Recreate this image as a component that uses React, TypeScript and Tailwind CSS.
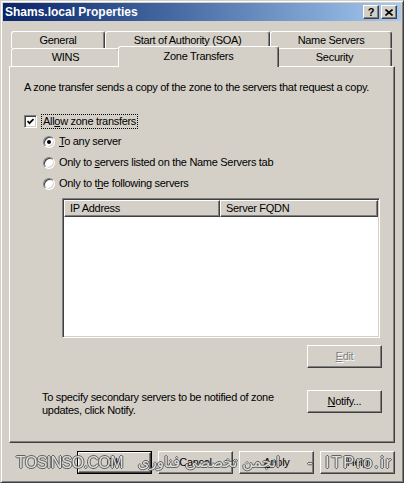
import type { ReactNode } from 'react';

const raised =
  'border border-t-white border-l-white border-r-[#404040] border-b-[#404040] shadow-[inset_-1px_-1px_#808080]';
const sunken =
  'border border-t-[#808080] border-l-[#808080] border-r-white border-b-white shadow-[inset_1px_1px_#404040,inset_-1px_-1px_#d4d0c8]';

function Tab({ label, width, selected }: { label: string; width: string; selected?: boolean }) {
  return (
    <div
      className={`${width} ${
        selected ? 'relative z-10 h-[21px] -mx-[2px] mb-[-1px] bg-[#d4d0c8] items-start pt-[3px]' : 'h-full items-center'
      } flex justify-center rounded-t-[3px] border-t border-l border-r border-t-white border-l-white border-r-[#404040] shadow-[inset_-1px_0_#808080]`}
    >
      {label}
    </div>
  );
}

function Button({ children, disabled, isDefault }: { children: ReactNode; disabled?: boolean; isDefault?: boolean }) {
  const inner = (
    <div
      className={`${raised} w-full h-full flex items-center justify-center ${
        disabled ? 'text-[#808080] [text-shadow:1px_1px_0_white]' : ''
      }`}
    >
      {children}
    </div>
  );
  if (isDefault) return <div className="w-[75px] h-[23px] border border-black">{inner}</div>;
  return <div className="w-[75px] h-[23px]">{inner}</div>;
}

function Radio({ checked, children }: { checked?: boolean; children: ReactNode }) {
  return (
    <div className="flex items-center h-[13px] pl-[33px]">
      <div className={`w-[12px] h-[12px] rounded-full bg-white flex items-center justify-center ${sunken}`}>
        {checked && <div className="w-[4px] h-[4px] rounded-full bg-black" />}
      </div>
      <span className="ml-[4px]">{children}</span>
    </div>
  );
}

export default function App() {
  return (
    <div className="relative w-[404px] h-[483px] bg-[#d4d0c8] border border-t-[#d4d0c8] border-l-[#d4d0c8] border-r-[#404040] border-b-[#404040] shadow-[inset_1px_1px_white,inset_-1px_-1px_#808080] p-[2px] font-['Liberation_Sans',Arial,sans-serif] text-[11px] leading-[13px] tracking-[-0.3px] text-black overflow-hidden">
      {/* title bar */}
      <div className="h-[18px] flex items-center bg-linear-to-r from-[#0a246a] to-[#a6caf0] pl-[2px] pr-[4px]">
        <span className="font-bold text-[12px] tracking-normal text-white">Shams.local Properties</span>
        <div className="ml-auto flex gap-[2px]">
          <div className={`${raised} w-[16px] h-[14px] bg-[#d4d0c8] flex items-center justify-center font-bold text-[11px] tracking-normal`}>
            ?
          </div>
          <div className={`${raised} w-[16px] h-[14px] bg-[#d4d0c8] flex items-center justify-center`}>
            <svg width="8" height="7" viewBox="0 0 8 7">
              <path d="M0.5 0.5 L7.5 6.5 M7.5 0.5 L0.5 6.5" stroke="black" strokeWidth="1.6" />
            </svg>
          </div>
        </div>
      </div>

      <div className="px-[6px] mt-[10px]">
        {/* tabs */}
        <div className="pl-[2px]">
          <div className="flex h-[17px]">
            <Tab label="General" width="w-[94px]" />
            <Tab label="Start of Authority (SOA)" width="w-[165px]" />
            <Tab label="Name Servers" width="w-[122px]" />
          </div>
          <div className="flex items-end h-[18px]">
            <Tab label="WINS" width="w-[109px]" />
            <Tab label="Zone Transfers" width="w-[161px]" selected />
            <Tab label="Security" width="w-[115px]" />
          </div>
        </div>

        {/* panel */}
        <div className="h-[377px] border border-t-white border-l-white border-r-[#404040] border-b-[#404040] shadow-[inset_-1px_-1px_#808080]">
          <div className="pl-[14px] pt-[14px]">
            A zone transfer sends a copy of the zone to the servers that request a copy.
          </div>

          <div className="mt-[20px] ml-[14px] flex items-center h-[15px]">
            <div className={`w-[13px] h-[13px] bg-white flex items-center justify-center ${sunken}`}>
              <svg width="7" height="7" viewBox="0 0 7 7">
                <polyline points="0.5,3 2.5,5.2 6.5,1" fill="none" stroke="black" strokeWidth="1.7" />
              </svg>
            </div>
            <span className="ml-[4px] px-[1px] border border-dotted border-black leading-[13px]">
              All<u>o</u>w zone transfers
            </span>
          </div>

          <div className="mt-[6px] flex flex-col gap-[8px]">
            <Radio checked>
              <u>T</u>o any server
            </Radio>
            <Radio>
              Only to <u>s</u>ervers listed on the Name Servers tab
            </Radio>
            <Radio>
              Only to t<u>h</u>e following servers
            </Radio>
          </div>

          {/* list view */}
          <div className={`mt-[8px] ml-[52px] w-[318px] h-[140px] bg-white ${sunken} p-[1px]`}>
            <div className="flex h-[17px] bg-[#d4d0c8]">
              <div className={`${raised} w-[156px] h-full flex items-center pl-[5px]`}>IP Address</div>
              <div className={`${raised} flex-1 h-full flex items-center pl-[5px]`}>Server FQDN</div>
            </div>
          </div>

          <div className="mt-[7px] flex justify-end pr-[12px]">
            <Button disabled>
              <u>E</u>dit
            </Button>
          </div>

          <div className="mt-[22px] flex pr-[12px]">
            <div className="pl-[32px] pt-[1px] whitespace-nowrap">
              To specify secondary servers to be notified of zone
              <br />
              updates, click Notify.
            </div>
            <div className="ml-auto">
              <Button>
                <u>N</u>otify...
              </Button>
            </div>
          </div>
        </div>

        {/* dialog buttons */}
        <div className="mt-[8px] flex justify-end gap-[6px]">
          <Button isDefault>OK</Button>
          <Button>Cancel</Button>
          <Button>
            <u>A</u>pply
          </Button>
          <Button>Help</Button>
        </div>
      </div>

      {/* watermark over the dialog buttons */}
      <div className="absolute left-[15px] top-[452px] h-[18px] flex items-center whitespace-nowrap pointer-events-none text-[#e2e2e2] opacity-90 [text-shadow:-1px_0_#555,1px_0_#555,0_-1px_#555,0_1px_#555] tracking-normal">
        <span className="w-[107px] text-[16px] tracking-[-0.6px]">TOSINSO.COM</span>
        <span dir="rtl" className="w-[172px] text-center font-['DejaVu_Sans',sans-serif] text-[15px]">
          انجمن تخصصی فناوری
        </span>
        <span className="w-[30px] text-center text-[16px]">-</span>
        <span className="text-[17px] tracking-[1.5px]">ITPro.ir</span>
      </div>
    </div>
  );
}
